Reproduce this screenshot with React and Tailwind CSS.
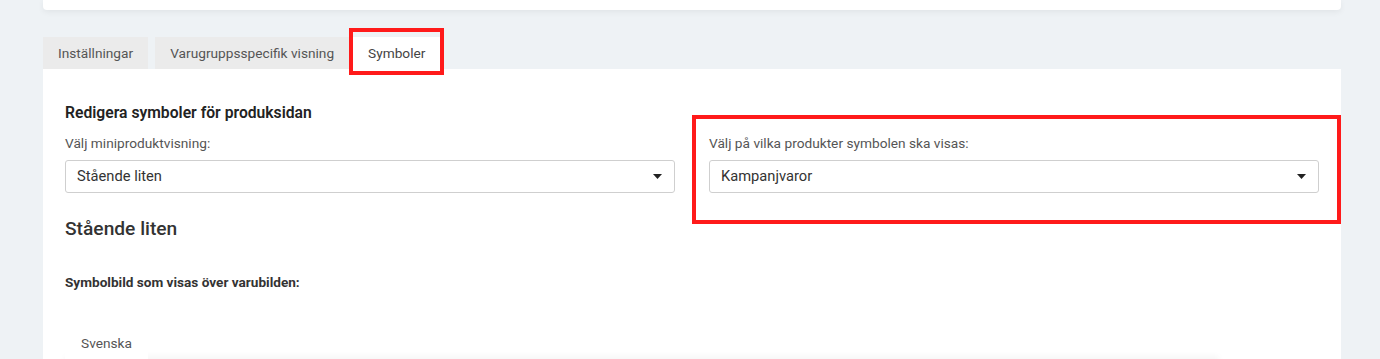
import React from "react";

const Caret = () => (
  <svg width="9" height="5" viewBox="0 0 9 5" className="shrink-0">
    <path d="M0 0 L9 0 L4.5 5 Z" fill="#222" />
  </svg>
);

const Select = ({ value }) => (
  <div className="flex items-center justify-between h-[33px] border border-[#cfcfcf] rounded-[3px] bg-white pl-[11px] pr-[12px]">
    <span className="text-[14.7px] text-[#333]">{value}</span>
    <Caret />
  </div>
);

const tabs = ["Inställningar", "Varugruppsspecifik visning"];

export default function App() {
  return (
    <div
      className="min-h-[359px] h-[359px] overflow-hidden bg-[#eef2f5]"
      style={{ fontFamily: "Roboto, 'Liberation Sans', sans-serif" }}
    >
      <div className="mx-[43px] w-[1298px]">
        {/* top card edge */}
        <div className="h-[10px] bg-white rounded-b-[4px] shadow-[0_2px_6px_rgba(0,0,0,0.06)]" />

        {/* Tabs */}
        <div className="flex items-end gap-[7px] mt-[27px] h-[32px]">
          {tabs.map((t) => (
            <div
              key={t}
              className="h-[32px] flex items-center px-[15px] bg-[#ebebeb] text-[13.7px] text-[#555]"
            >
              {t}
            </div>
          ))}
          <div className="relative -ml-[7px] h-[32px] flex items-center px-[19px] bg-white text-[13.7px] text-[#444]">
            Symboler
            <div className="absolute left-0 right-0 top-[-9px] bottom-[-6px] border-[4px] border-[#ff1a1a]" />
          </div>
        </div>

        {/* Panel */}
        <div className="bg-white px-[22px] pt-[34px] pb-0">
          <h3 className="text-[15.7px] leading-[20px] font-semibold text-[#222]">
            Redigera symboler för produksidan
          </h3>
          <div className="grid grid-cols-2 gap-[34px] mt-[11px]">
            <div>
              <div className="text-[13.7px] leading-[18px] text-[#555] mb-[8px]">
                Välj miniproduktvisning:
              </div>
              <Select value="Stående liten" />
            </div>
            <div className="relative">
              <div className="text-[13.7px] leading-[18px] text-[#555] mb-[8px]">
                Välj på vilka produkter symbolen ska visas:
              </div>
              <Select value="Kampanjvaror" />
              <div className="absolute left-[-17px] right-[-22px] top-[-19px] bottom-[-31px] border-[4px] border-[#ff1a1a]" />
            </div>
          </div>

          <h2 className="mt-[24px] text-[19.2px] leading-[24px] font-medium text-[#333]">
            Stående liten
          </h2>

          <div className="mt-[32px] text-[13.6px] leading-[18px] font-bold text-[#333]">
            Symbolbild som visas över varubilden:
          </div>

          <div className="mt-[37px] flex items-end">
            <div className="h-[31px] w-[83px] flex items-center px-[16px] bg-white text-[13.7px] text-[#555]">
              Svenska
            </div>
          </div>
          <div className="h-[20px] mr-[100px] bg-white shadow-[0_-3px_6px_rgba(0,0,0,0.04)]" />
        </div>
      </div>
    </div>
  );
}
